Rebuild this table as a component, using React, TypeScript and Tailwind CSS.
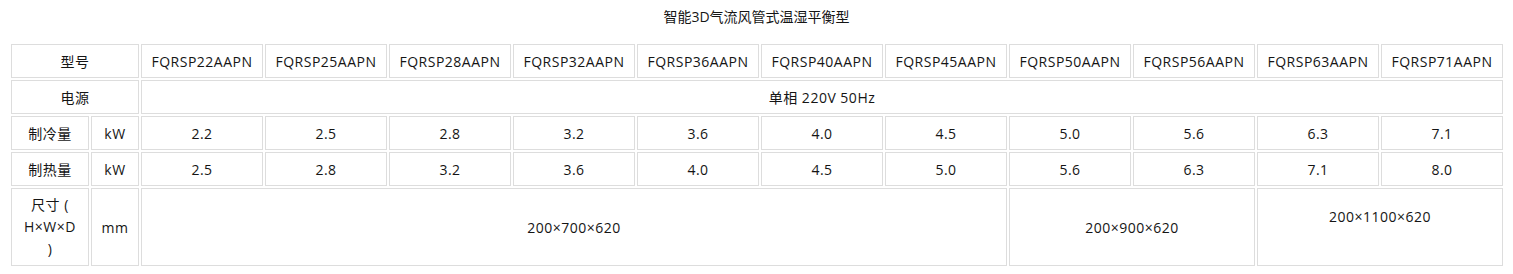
import React from "react";

const models = ["FQRSP22AAPN","FQRSP25AAPN","FQRSP28AAPN","FQRSP32AAPN","FQRSP36AAPN","FQRSP40AAPN","FQRSP45AAPN","FQRSP50AAPN","FQRSP56AAPN","FQRSP63AAPN","FQRSP71AAPN"];
const cool = ["2.2","2.5","2.8","3.2","3.6","4.0","4.5","5.0","5.6","6.3","7.1"];
const heat = ["2.5","2.8","3.2","3.6","4.0","4.5","5.0","5.6","6.3","7.1","8.0"];

const td = "border border-[#dddddd] text-center align-middle p-0";

export default function App() {
  return (
    <div className="bg-white w-[1513px] h-[274px] text-[#151515] text-[14px]" style={{ fontFamily: '"Open Sans", "Noto Sans CJK SC", sans-serif' }}>
      <div className="h-[34px] leading-[34px] text-center">智能3D气流风管式温湿平衡型</div>
      <table className="ml-[9px] mt-[8px] w-[1496px] table-fixed border-separate border-spacing-[2px] tracking-[0.5px]">
        <colgroup>
          <col className="w-[78px]" />
          <col className="w-[48px]" />
          {models.map((m) => (
            <col key={m} className="w-[122px]" />
          ))}
        </colgroup>
        <tbody>
          <tr className="h-[34px]">
            <td colSpan={2} className={td}>型号</td>
            {models.map((m) => (
              <td key={m} className={td}>{m}</td>
            ))}
          </tr>
          <tr className="h-[34px]">
            <td colSpan={2} className={td}>电源</td>
            <td colSpan={11} className={td}>单相 220V 50Hz</td>
          </tr>
          <tr className="h-[34px]">
            <td className={td}>制冷量</td>
            <td className={td}>kW</td>
            {cool.map((v, i) => (
              <td key={i} className={td}>{v}</td>
            ))}
          </tr>
          <tr className="h-[34px]">
            <td className={td}>制热量</td>
            <td className={td}>kW</td>
            {heat.map((v, i) => (
              <td key={i} className={td}>{v}</td>
            ))}
          </tr>
          <tr className="h-[78px]">
            <td className={td + " leading-[22px]"}>
              尺寸 (<br />H×W×D<br />)
            </td>
            <td className={td}>mm</td>
            <td colSpan={7} className={td}>200×700×620</td>
            <td colSpan={2} className={td}>200×900×620</td>
            <td colSpan={2} className={td + " pb-[22px]"}>200×1100×620</td>
          </tr>
        </tbody>
      </table>
    </div>
  );
}
